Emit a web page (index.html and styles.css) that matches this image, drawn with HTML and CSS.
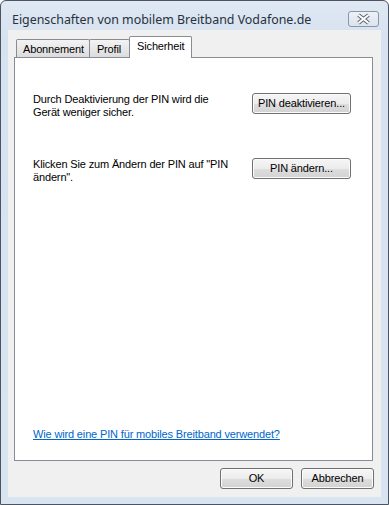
FILE: index.html
```html
<!DOCTYPE html>
<html lang="de">
<head>
<meta charset="utf-8">
<title>Eigenschaften von mobilem Breitband Vodafone.de</title>
<link rel="stylesheet" href="styles.css">
</head>
<body>
<div class="window">
  <div class="titlebar">
    <span class="title">Eigenschaften von mobilem Breitband Vodafone.de</span>
    <div class="close">
      <svg width="29" height="14" viewBox="0 0 29 14">
        <path d="M9.5 3 L19.5 11 M19.5 3 L9.5 11" stroke="#5b6472" stroke-width="4" fill="none"/>
        <path d="M9.5 3 L19.5 11 M19.5 3 L9.5 11" stroke="#ffffff" stroke-width="2" fill="none"/>
      </svg>
    </div>
  </div>
  <div class="client">
    <div class="tabs">
      <div class="tab">Abonnement</div>
      <div class="tab short">Profil</div>
      <div class="tab active">Sicherheit</div>
    </div>
    <div class="panel">
      <div class="row">
        <p class="desc">Durch Deaktivierung der PIN wird die Gerät weniger sicher.</p>
        <div class="btn wide">PIN deaktivieren...</div>
      </div>
      <div class="row">
        <p class="desc">Klicken Sie zum Ändern der PIN auf "PIN ändern".</p>
        <div class="btn wide">PIN ändern...</div>
      </div>
      <a class="help" href="#">Wie wird eine PIN für mobiles Breitband verwendet?</a>
    </div>
    <div class="actions">
      <div class="btn">OK</div>
      <div class="btn">Abbrechen</div>
    </div>
  </div>
</div>
</body>
</html>
```
FILE: styles.css
```css
html, body {
  margin: 0;
  padding: 0;
  background: #ffffff;
}

.window {
  box-sizing: border-box;
  width: 389px;
  height: 505px;
  border: 1px solid #4a5462;
  border-radius: 6px 6px 0 0;
  background: linear-gradient(#dfe8f3, #d6e2ef 40px, #d9e4f1);
  padding: 0 7px 7px 7px;
  display: flex;
  flex-direction: column;
}

.titlebar {
  height: 29px;
  margin: 0 -7px;
  padding: 0 9px 0 11px;
  display: flex;
  justify-content: space-between;
  align-items: flex-start;
}

.title {
  margin-top: 11px;
  font-family: "Noto Sans", "Open Sans", sans-serif;
  font-size: 12.4px;
  line-height: 16px;
  color: #27313d;
}

.close {
  margin-top: 10px;
  width: 29px;
  height: 14px;
  border: 1px solid #8a97aa;
  border-radius: 3px;
  background: linear-gradient(#eef2f7, #dbe3ed);
  display: flex;
}

.close svg {
  display: block;
}

.client {
  flex: 1;
  background: #f0f0f0;
  padding: 6px 8px 0 6px;
  display: flex;
  flex-direction: column;
  font-family: "Liberation Sans", Arial, sans-serif;
  font-size: 11px;
  line-height: 13px;
  letter-spacing: -0.15px;
  color: #000000;
}

.tabs {
  height: 21px;
  padding-left: 2px;
  display: flex;
  align-items: flex-end;
}

.tab {
  box-sizing: border-box;
  height: 18px;
  padding: 3px 5px 0 6px;
  border: 1px solid #898c95;
  border-bottom: none;
  border-radius: 2px 2px 0 0;
  background: linear-gradient(#f3f3f3, #e8e8e8 50%, #dcdcdc);
  margin-right: -1px;
}

.tab.short {
  padding: 3px 8px 0 7px;
}

.tab.active {
  height: 22px;
  margin-bottom: -1px;
  padding: 3px 7px 0 7px;
  background: #ffffff;
  position: relative;
  z-index: 1;
}

.panel {
  box-sizing: border-box;
  height: 404px;
  border: 1px solid #898c95;
  background: #ffffff;
  padding: 35px 21px 19px 18px;
  display: flex;
  flex-direction: column;
}

.row {
  display: flex;
  justify-content: space-between;
  align-items: flex-start;
  margin-bottom: 39px;
}

.desc {
  margin: 0;
  width: 200px;
}

.btn {
  box-sizing: border-box;
  width: 73px;
  height: 21px;
  border: 1px solid #707070;
  border-radius: 3px;
  background: linear-gradient(#f6f6f6, #ececec 50%, #dedede 51%, #d2d2d2);
  box-shadow: inset 0 0 0 1px #fbfbfb;
  display: flex;
  align-items: center;
  justify-content: center;
  white-space: nowrap;
}

.btn.wide {
  width: 99px;
}

.help {
  margin-top: auto;
  color: #0066cc;
  text-decoration: underline;
}

.actions {
  margin-top: 7px;
  margin-right: -1px;
  display: flex;
  justify-content: flex-end;
  gap: 8px;
}
```
